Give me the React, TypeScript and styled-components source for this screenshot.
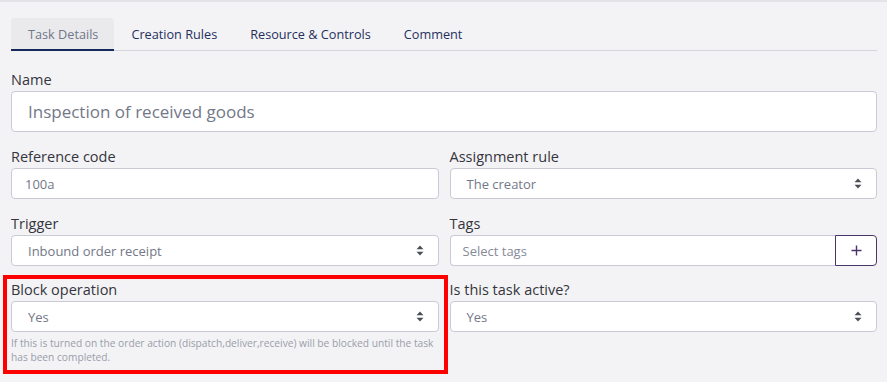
import React from "react";
import styled, { createGlobalStyle } from "styled-components";

const GlobalStyle = createGlobalStyle`
  html, body {
    margin: 0;
    padding: 0;
    background: #f3f3f5;
    font-family: "Open Sans", "Noto Sans", sans-serif;
  }
  * {
    box-sizing: border-box;
  }
`;

const Page = styled.div`
  border-top: 2px solid #e4e4e8;
  padding: 16px 10px 0 11px;
  min-height: 382px;
`;

const TabBar = styled.div`
  display: flex;
  border-bottom: 1px solid #d3d4dc;
  margin-bottom: 19px;
`;

const Tab = styled.div<{ $active?: boolean }>`
  height: 33px;
  padding: 0 16px 0 17px;
  display: flex;
  align-items: center;
  font-size: 12.7px;
  color: ${(p) => (p.$active ? "#70778a" : "#1f2f5e")};
  background: ${(p) => (p.$active ? "#eaeaec" : "transparent")};
  border-radius: 4px 4px 0 0;
  border-bottom: 2px solid ${(p) => (p.$active ? "#15295c" : "transparent")};
  margin-bottom: -1px;
`;

const Field = styled.div<{ $flagged?: boolean; $space?: number }>`
  position: relative;
  display: flex;
  flex-direction: column;
  margin-bottom: ${(p) => p.$space ?? 15}px;

  ${(p) =>
    p.$flagged &&
    `
    &::after {
      content: "";
      position: absolute;
      left: -8px;
      right: -9px;
      top: -5px;
      bottom: -10px;
      border: 4px solid #ff0000;
      pointer-events: none;
    }
  `}
`;

const Label = styled.label`
  font-size: 14.5px;
  line-height: 20px;
  color: #35353d;
  margin-bottom: 1px;
`;

const Row = styled.div`
  display: grid;
  grid-template-columns: 1fr 1fr;
  column-gap: 11px;
  align-items: start;
`;

const Box = styled.div<{ $big?: boolean }>`
  display: flex;
  align-items: center;
  justify-content: space-between;
  height: ${(p) => (p.$big ? "41px" : "31px")};
  padding: 0 14px 0 ${(p) => (p.$big ? "16px" : "13px")};
  background: #ffffff;
  border: 1px solid #c9cad6;
  border-radius: 4px;
  font-size: ${(p) => (p.$big ? "17px" : "13px")};
  color: #737888;
`;

const SelectText = styled.span`
  padding-left: 3px;
`;

const Placeholder = styled.span`
  color: #868a98;
`;

const Group = styled.div`
  display: flex;
  height: 31px;
`;

const GroupInput = styled(Box)`
  flex: 1;
  border-radius: 4px 0 0 4px;
  border-right: none;
  padding-left: 12px;
`;

const AddButton = styled.button`
  width: 42px;
  height: 31px;
  border: 1px solid #4a3569;
  border-radius: 0 4px 4px 0;
  background: #ffffff;
  color: #4a3569;
  display: flex;
  align-items: center;
  justify-content: center;
  padding: 0;
`;

const Help = styled.div`
  margin-top: 4px;
  font-size: 10.2px;
  line-height: 14px;
  color: #9a9daa;
`;

const Caret = () => (
  <svg width="8" height="11" viewBox="0 0 8 11">
    <path d="M4 0.5 L7.5 4.2 H0.5 Z" fill="#4a4d57" />
    <path d="M4 10.5 L7.5 6.8 H0.5 Z" fill="#4a4d57" />
  </svg>
);

const Plus = () => (
  <svg width="11" height="11" viewBox="0 0 11 11">
    <path d="M5.5 0.5 V10.5 M0.5 5.5 H10.5" stroke="#4a3569" strokeWidth="1.4" />
  </svg>
);

const Select: React.FC<{ value: string }> = ({ value }) => (
  <Box>
    <SelectText>{value}</SelectText>
    <Caret />
  </Box>
);

export default function App() {
  return (
    <>
      <GlobalStyle />
      <Page>
        <TabBar>
          <Tab $active>Task Details</Tab>
          <Tab>Creation Rules</Tab>
          <Tab>Resource &amp; Controls</Tab>
          <Tab>Comment</Tab>
        </TabBar>

        <Field>
          <Label>Name</Label>
          <Box $big>Inspection of received goods</Box>
        </Field>

        <Row>
          <Field>
            <Label>Reference code</Label>
            <Box>100a</Box>
          </Field>
          <Field>
            <Label>Assignment rule</Label>
            <Select value="The creator" />
          </Field>
        </Row>

        <Row>
          <Field $space={14}>
            <Label>Trigger</Label>
            <Select value="Inbound order receipt" />
          </Field>
          <Field $space={14}>
            <Label>Tags</Label>
            <Group>
              <GroupInput>
                <Placeholder>Select tags</Placeholder>
              </GroupInput>
              <AddButton aria-label="Add tag">
                <Plus />
              </AddButton>
            </Group>
          </Field>
        </Row>

        <Row>
          <Field $flagged>
            <Label>Block operation</Label>
            <Select value="Yes" />
            <Help>
              If this is turned on the order action (dispatch,deliver,receive) will be blocked until the task
              has been completed.
            </Help>
          </Field>
          <Field>
            <Label>Is this task active?</Label>
            <Select value="Yes" />
          </Field>
        </Row>
      </Page>
    </>
  );
}
